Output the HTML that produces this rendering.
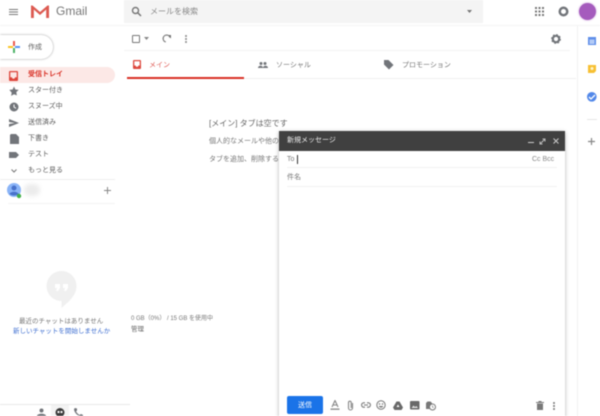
<!DOCTYPE html>
<html lang="ja"><head><meta charset="utf-8"><style>
html,body{margin:0;padding:0;background:#fff}
#p{position:relative;width:600px;height:416px;overflow:hidden;background:#fff;font-family:"Liberation Sans","Noto Sans CJK JP",sans-serif;color:#666;filter:blur(.5px)}
#p *{position:absolute;white-space:nowrap}
#p svg *{position:static}
#p svg{opacity:.88}
.t{font-size:7px;line-height:10px;color:#5c5c5c}
.g{fill:#5f6368}
</style></head><body><div id="p">
<!-- top -->
<div style="left:9px;top:9px;width:9px;height:1px;background:#777;box-shadow:0 2.5px 0 #777,0 5px 0 #777"></div>
<svg style="left:30px;top:4px" width="20" height="15" viewBox="0 0 20 15"><path d="M1 14V2h2l7 6 7-6h2v12h-3V6l-6 5-6-5v8z" fill="#e8e8e8"/><path d="M1 14V1.500h1.500L10 8l7.500-6.500H19V14h-2.800V5.500L10 11 3.800 5.500V14z" fill="#d9443a"/></svg>
<div style="left:56px;top:4px;font-size:12px;line-height:15px;color:#777">Gmail</div>
<div style="left:124px;top:0;width:359px;height:23px;background:#f4f4f4"></div>
<svg style="left:131px;top:6px" width="11" height="11" viewBox="0 0 11 11"><circle cx="4.500" cy="4.500" r="3" fill="none" stroke="#666" stroke-width="1.400"/><path d="M6.800 6.800L10 10" stroke="#666" stroke-width="1.500"/></svg>
<div style="left:150px;top:7px;font-size:8px;line-height:10px;color:#888">メールを検索</div>
<svg style="left:467px;top:10px" width="5" height="3"><path d="M0 0h5L2.500 3z" fill="#666"/></svg>
<svg style="left:535px;top:7px" width="9" height="9" viewBox="0 0 9 9" fill="#666"><path d="M0 0h2v2H0zM3.500 0h2v2h-2zM7 0h2v2H7zM0 3.500h2v2H0zM3.500 3.500h2v2h-2zM7 3.500h2v2H7zM0 7h2v2H0zM3.500 7h2v2h-2zM7 7h2v2H7z"/></svg>
<svg style="left:558px;top:6px" width="11" height="11"><circle cx="5.500" cy="5.500" r="5" fill="#5f6368"/><circle cx="5.500" cy="5.500" r="2.500" fill="#fff"/></svg>
<div style="left:579px;top:3px;width:17px;height:17px;border-radius:50%;background:#a55bbd;box-shadow:0 0 2px #c79ad6"></div>
<div style="left:0;top:25px;width:600px;height:1px;background:#f4f4f4"></div>
<!-- sidebar -->
<div style="left:0;top:35px;width:53px;height:24px;background:#fff;border-radius:0 12px 12px 0;box-shadow:0 0 2px rgba(0,0,0,.4)"></div>
<svg style="left:7px;top:40px" width="14" height="14"><path d="M6 1h2v5H6z" fill="#ea4335"/><path d="M8 6h5v2H8z" fill="#4285f4"/><path d="M6 8h2v5H6z" fill="#34a853"/><path d="M1 6h5v2H1z" fill="#fbbc05"/></svg>
<div class="t" style="left:28px;top:43px">作成</div>
<div style="left:0;top:67px;width:115px;height:16px;background:#fce8e6;border-radius:0 8px 8px 0"></div>
<svg style="left:9px;top:71px" width="9" height="10"><path fill-rule="evenodd" d="M1 0h7a1 1 0 011 1v8a1 1 0 01-1 1H1a1 1 0 01-1-1V1a1 1 0 011-1zm.300 1.300v5H3a1.500 1.500 0 003 0h1.700v-5z" fill="#d93025"/></svg>
<div class="t" style="left:28px;top:70px;color:#d93025;font-weight:bold">受信トレイ</div>
<svg style="left:9px;top:86px" width="10" height="10"><path d="M5 .5l1.400 3 3.300.4-2.400 2.200.6 3.300L5 8.200 2.100 9.900l.6-3.300L.3 3.900l3.300-.4z" class="g"/></svg>
<div class="t" style="left:28px;top:86px">スター付き</div>
<svg style="left:9px;top:102px" width="10" height="10"><circle cx="5" cy="5" r="4.500" class="g"/><path d="M5 2.500V5l2 1.300" stroke="#fff" fill="none"/></svg>
<div class="t" style="left:28px;top:102px">スヌーズ中</div>
<svg style="left:9px;top:118px" width="10" height="10"><path d="M0 1l10 4-10 4V6l6-1-6-1z" class="g"/></svg>
<div class="t" style="left:28px;top:118px">送信済み</div>
<svg style="left:10px;top:134px" width="9" height="10"><path d="M1 0h5l3 3v7H0V1z" class="g"/></svg>
<div class="t" style="left:28px;top:134px">下書き</div>
<svg style="left:9px;top:151px" width="10" height="8"><path d="M0 1h7l3 3-3 3H0z" class="g"/></svg>
<div class="t" style="left:28px;top:150px">テスト</div>
<svg style="left:11px;top:169px" width="6" height="4"><path d="M.5.500L3 3 5.500.500" stroke="#666" fill="none"/></svg>
<div class="t" style="left:28px;top:166px">もっと見る</div>
<div style="left:0;top:179px;width:115px;height:1px;background:#eee"></div>
<svg style="left:7px;top:183px" width="15" height="16"><circle cx="7" cy="7" r="7" fill="#7baaf7"/><circle cx="7" cy="5" r="2.500" fill="#2f5fc4"/><path d="M2.500 11c1-3 8-3 9 0-2 2-7 2-9 0z" fill="#2f5fc4"/><circle cx="12" cy="13" r="2.200" fill="#2aa52f"/></svg>
<div style="left:24px;top:184px;width:16px;height:12px;background:#ececec;border-radius:6px;filter:blur(2px)"></div>
<svg style="left:104px;top:187px" width="7" height="7"><path d="M3.500 0v7M0 3.500h7" stroke="#777"/></svg>
<div style="left:8px;top:203px;width:107px;height:1px;background:#f3f3f3"></div>
<svg style="left:46px;top:271px" width="31" height="37"><path d="M15.500 0a15 15 0 0115 15c0 9-7 15-15 22v-7a15 15 0 010-30z" fill="#eee"/><path d="M9 13h5v4l-2 3h-2l1-3H9zM17 13h5v4l-2 3h-2l1-3h-2z" fill="#fff"/></svg>
<div style="left:19px;top:317px;font-size:6.500px;line-height:10px;color:#777">最近のチャットはありません</div>
<div style="left:13px;top:327px;font-size:6.500px;line-height:10px;color:#3f6fd1">新しいチャットを開始しませんか</div>
<div style="left:0;top:404px;width:130px;height:1px;background:#e8e8e8"></div>
<div style="left:51px;top:405px;width:18px;height:11px;background:#f3f3f3"></div>
<svg style="left:37px;top:408px" width="9" height="8"><circle cx="4.500" cy="2.500" r="2" class="g"/><path d="M0 8c0-3 9-3 9 0z" class="g"/></svg>
<svg style="left:55px;top:408px" width="10" height="8"><circle cx="5" cy="4.500" r="4.500" fill="#222"/><path d="M2.500 3h2v2h-2zM5.500 3h2v2h-2z" fill="#fff"/></svg>
<svg style="left:74px;top:408px" width="9" height="8"><path d="M1 0l2 .5v2L2 3.500c1 1.500 2 2.500 3.500 3.500L7 6l2 1v1H7C3 8 0 4 0 1z" class="g"/></svg>
<!-- toolbar -->
<div style="left:132px;top:35px;width:6px;height:6px;border:1.300px solid #777;border-radius:1px"></div>
<svg style="left:144px;top:37px" width="5" height="3"><path d="M0 0h5L2.500 3z" fill="#777"/></svg>
<svg style="left:162px;top:34px" width="9" height="9"><path d="M7.500 2.500A3.500 3.500 0 105 8" fill="none" stroke="#666" stroke-width="1.200" transform="rotate(20 4.500 4.500)"/><path d="M5.500 1H9v3.500z" fill="#666"/></svg>
<div style="left:185px;top:35px;width:2px;height:2px;background:#888;border-radius:50%;box-shadow:0 3px 0 #888,0 6px 0 #888"></div>
<svg style="left:551px;top:34px" width="10" height="10"><circle cx="5" cy="5" r="3.200" fill="none" stroke="#5f6368" stroke-width="2.200"/><circle cx="5" cy="5" r="4.200" fill="none" stroke="#5f6368" stroke-width="1.400" stroke-dasharray="1.700 1.600"/></svg>
<div style="left:124px;top:50px;width:446px;height:1px;background:#f3f3f3"></div>
<div style="left:127px;top:78px;width:449px;height:1px;background:#f0f0f0"></div>
<div style="left:127px;top:77px;width:117px;height:2px;background:#d93025"></div>
<svg style="left:133px;top:60px" width="8" height="9"><path fill-rule="evenodd" d="M1 0h6a1 1 0 011 1v7a1 1 0 01-1 1H1a1 1 0 01-1-1V1a1 1 0 011-1zm.300 1.300v4.200H2.700a1.300 1.300 0 002.600 0h1.400V1.300z" fill="#d93025"/></svg>
<div class="t" style="left:149px;top:61px;color:#e0605a">メイン</div>
<svg style="left:258px;top:62px" width="10" height="6"><circle cx="3" cy="1.500" r="1.500" class="g"/><circle cx="7" cy="1.500" r="1.500" class="g"/><path d="M0 6c0-3 5-3 5 0zM5 6c0-3 5-3 5 0z" class="g"/></svg>
<div class="t" style="left:276px;top:61px;color:#777">ソーシャル</div>
<svg style="left:384px;top:60px" width="10" height="10"><path d="M0 0h4.500L9.500 5 5 9.500 0 4.500z" class="g"/></svg>
<div class="t" style="left:402px;top:61px;color:#777">プロモーション</div>
<!-- empty -->
<div style="left:209px;top:118px;font-size:8px;line-height:12px;color:#666">[メイン] タブは空です</div>
<div class="t" style="left:209px;top:137px;color:#777">個人的なメールや他のタブに</div>
<div class="t" style="left:209px;top:155px;color:#777">タブを追加、削除するには</div>
<div style="left:131px;top:315px;font-size:6px;line-height:9px;color:#777">0 GB（0%） / 15 GB を使用中</div>
<div style="left:131px;top:325px;font-size:6.500px;line-height:9px;color:#666">管理</div>
<!-- right rail -->
<div style="left:577px;top:26px;width:1px;height:390px;background:#f2f2f2"></div>
<svg style="left:588px;top:37px" width="8" height="8"><rect width="8" height="8" fill="#4a7fe6"/><rect x="1.500" y="2.500" width="5" height="4.500" fill="#a9c4f5"/></svg>
<svg style="left:588px;top:65px" width="8" height="9"><path d="M0 0h8v6L6 8H0z" fill="#f6b818"/><circle cx="4" cy="3.500" r="1.500" fill="#fff3c4"/></svg>
<svg style="left:587px;top:92px" width="10" height="10"><circle cx="4.800" cy="4.800" r="4.800" fill="#3b78e7"/><path d="M2 5l2 2 4-4" fill="none" stroke="#fff" stroke-width="1.300"/></svg>
<div style="left:587px;top:119px;width:10px;height:1px;background:#e6e6e6"></div>
<svg style="left:588px;top:138px" width="7" height="7"><path d="M3.500 0v7M0 3.500h7" stroke="#777" stroke-width="1.200"/></svg>
<!-- compose -->
<div style="left:279px;top:131px;width:286px;height:290px;background:#fff;box-shadow:0 1px 4px rgba(0,0,0,.3)"></div>
<div style="left:279px;top:131px;width:286px;height:20px;background:#404040"></div>
<div style="left:287px;top:135px;font-size:7px;line-height:11px;color:#eee">新規メッセージ</div>
<div style="left:528px;top:142px;width:6px;height:1.300px;background:#ccc"></div>
<svg style="left:539px;top:138px" width="7" height="7"><path d="M1 6l5-5M3.500 1H6v2.500M1 3.500V6h2.500" fill="none" stroke="#ccc"/></svg>
<svg style="left:553px;top:138px" width="6" height="6"><path d="M.5.500l5 5M5.500.500l-5 5" stroke="#ddd"/></svg>
<div class="t" style="left:287px;top:155px;color:#777">To</div>
<div style="left:297px;top:155px;width:1px;height:9px;background:#333"></div>
<div style="left:532px;top:155px;font-size:7px;line-height:9px;color:#888">Cc Bcc</div>
<div style="left:287px;top:167px;width:270px;height:1px;background:#f2f2f2"></div>
<div class="t" style="left:287px;top:173px;color:#777">件名</div>
<div style="left:287px;top:186px;width:270px;height:1px;background:#f2f2f2"></div>
<div style="left:287px;top:396px;width:36px;height:18px;background:#1a73e8;border-radius:2px"></div>
<div style="left:298px;top:401px;font-size:7px;line-height:10px;color:#fff">送信</div>
<svg style="left:330px;top:400px" width="10" height="10"><path d="M2 7l3-6.500L8 7M3 5h4" fill="none" stroke="#777" stroke-width="1.100"/><path d="M.5 8.500h9v1.300h-9z" fill="#777"/></svg>
<svg style="left:347px;top:400px" width="7" height="11"><path d="M5.500 3v5a2 2 0 01-4 0V2.500a1.300 1.300 0 012.700 0V8" fill="none" stroke="#777" stroke-width="1.100"/></svg>
<svg style="left:361px;top:402px" width="10" height="6"><path d="M4 .8H2.800a2.200 2.200 0 000 4.400H4M6 .8h1.200a2.200 2.200 0 010 4.400H6M3 3h4" fill="none" stroke="#666" stroke-width="1.100"/></svg>
<svg style="left:376px;top:400px" width="10" height="10"><circle cx="5" cy="5" r="4.200" fill="none" stroke="#666"/><circle cx="3.500" cy="4" r=".8" fill="#666"/><circle cx="6.500" cy="4" r=".8" fill="#666"/><path d="M2.800 6h4.400a2.300 2.300 0 01-4.400 0z" fill="#666"/></svg>
<svg style="left:393px;top:401px" width="10" height="9"><path d="M3.500.5h3L10 6.500 8.500 9h-7L0 6.500z" fill="#555"/><path d="M5 3.500L3.500 6h3z" fill="#fff"/></svg>
<svg style="left:410px;top:401px" width="10" height="9"><rect width="9.500" height="8.500" rx="1" fill="#555"/><path d="M1.500 7l2-2.500 1.500 1.500 1.500-1 1.500 2z" fill="#ddd"/></svg>
<svg style="left:425px;top:400px" width="11" height="11"><path d="M2.500 1.500h3L7 3v6H1V3z" fill="#666"/><circle cx="7.500" cy="7" r="3" fill="#fff" stroke="#666"/><path d="M7.500 5.500V7l1 .7" stroke="#666" stroke-width=".7" fill="none"/></svg>
<svg style="left:536px;top:401px" width="8" height="9"><path d="M0 1h8v1H0zM2.500 0h3v1h-3zM1 2.500h6V9H1z" fill="#666"/></svg>
<div style="left:553px;top:402px;width:2px;height:2px;background:#777;border-radius:50%;box-shadow:0 3px 0 #777,0 6px 0 #777"></div>
</div></body></html>
